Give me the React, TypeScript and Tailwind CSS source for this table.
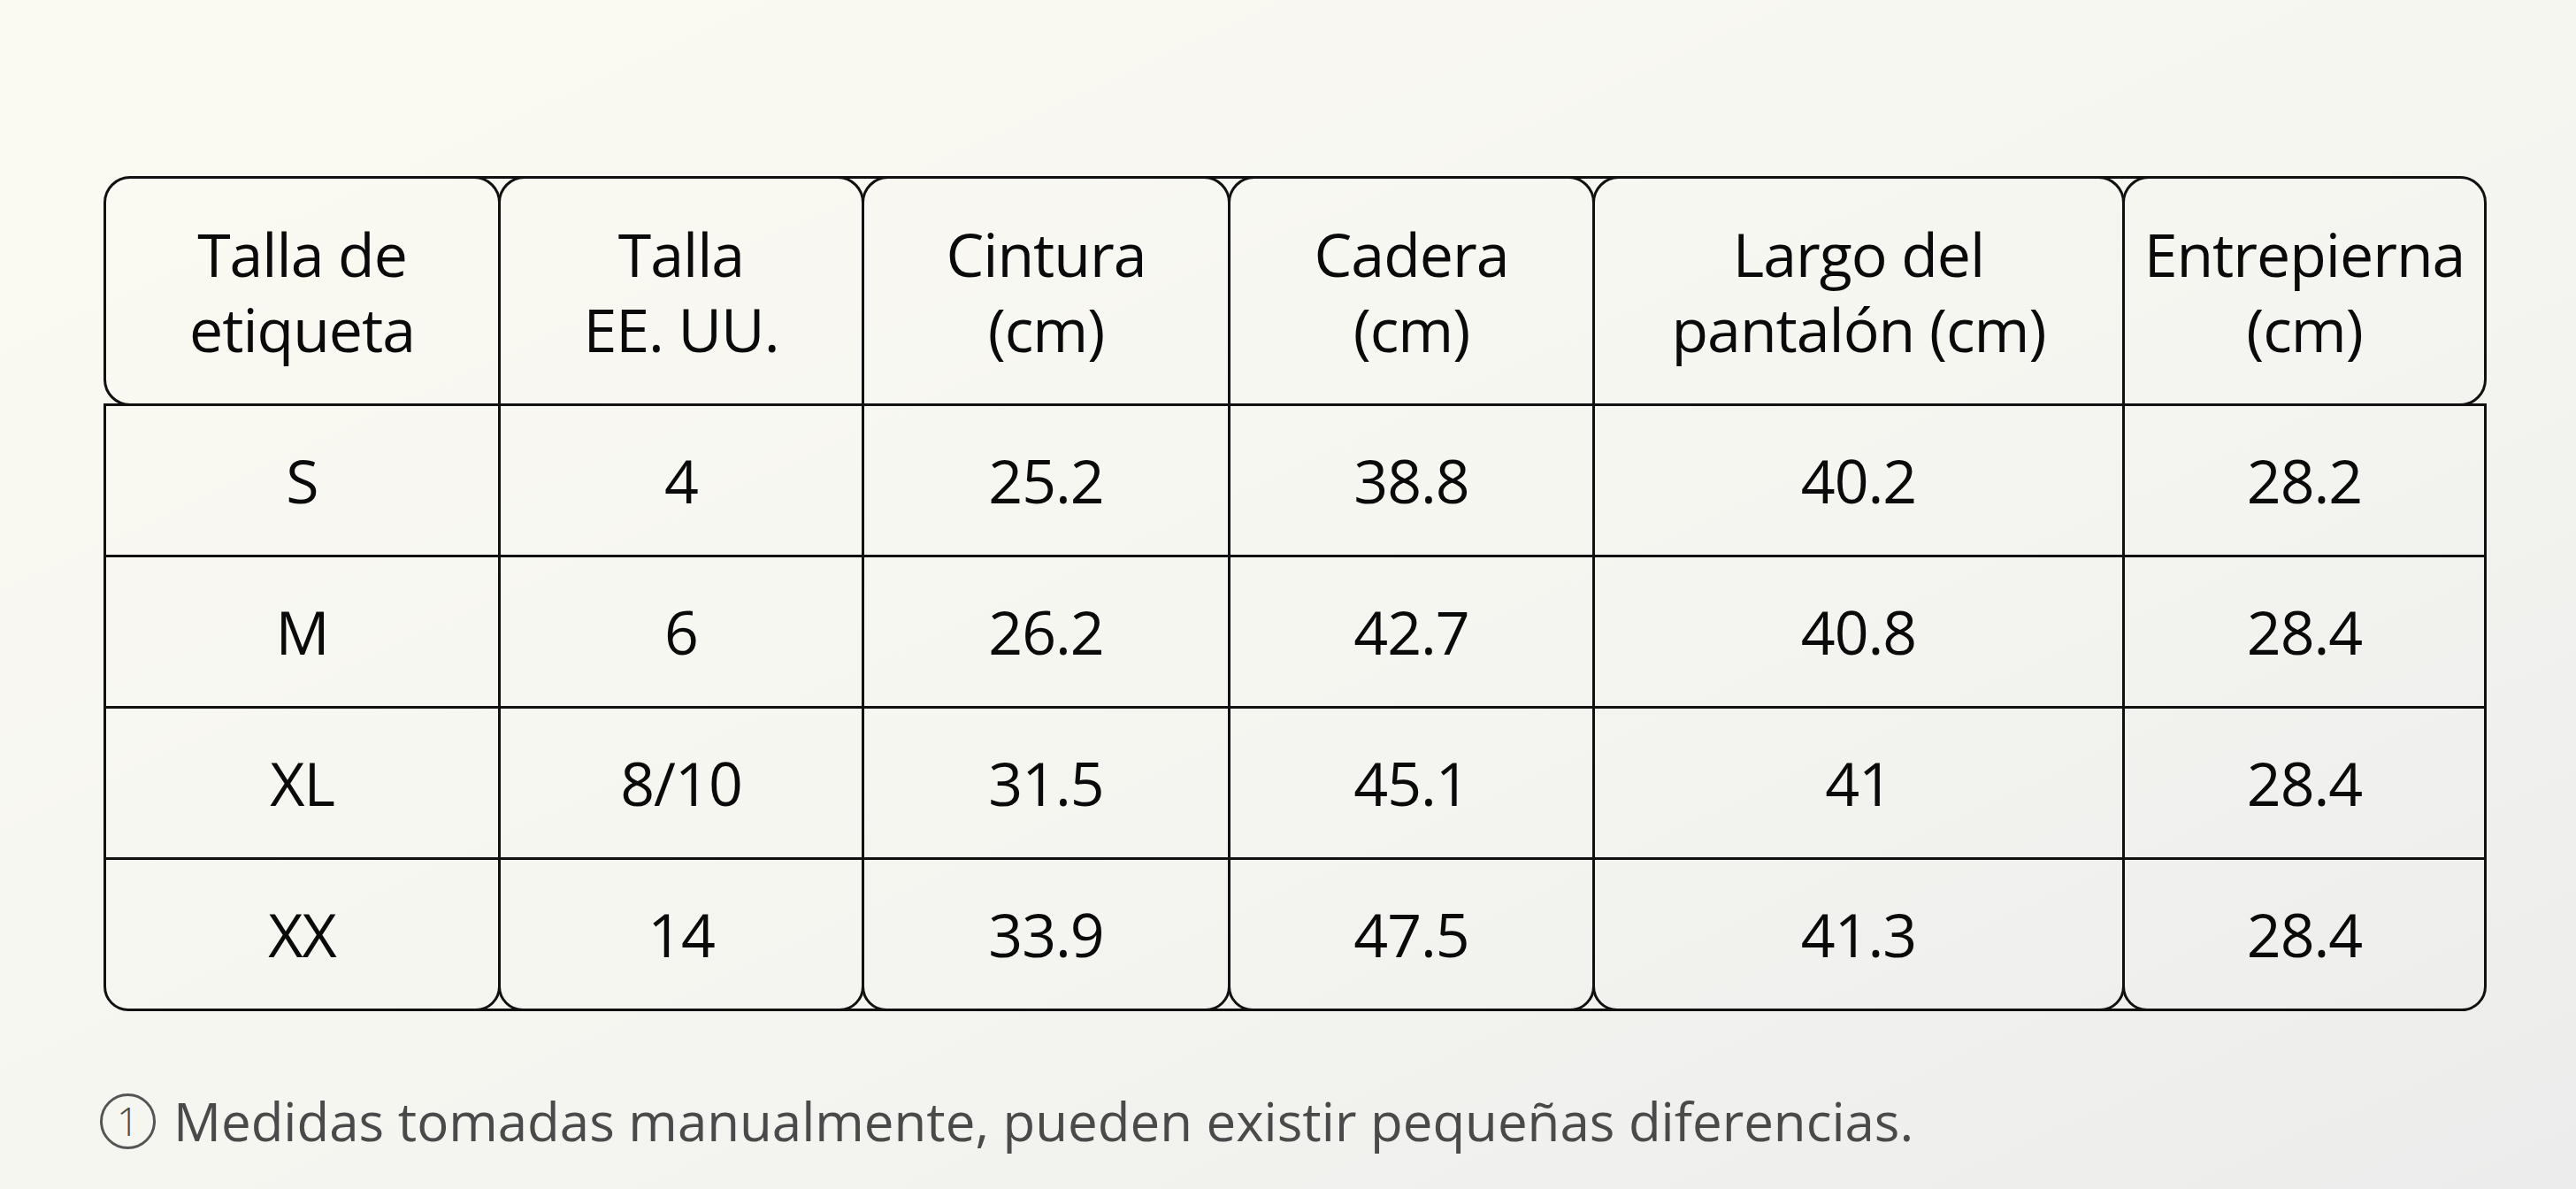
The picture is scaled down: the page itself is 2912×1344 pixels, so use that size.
import React from "react"

const cols = [
  { head: ["Talla de", "etiqueta"], w: "w-[449px]" },
  { head: ["Talla", "EE. UU."], w: "w-[414px]" },
  { head: ["Cintura", "(cm)"], w: "w-[417px]" },
  { head: ["Cadera", "(cm)"], w: "w-[415px]" },
  { head: ["Largo del", "pantalón (cm)"], w: "w-[602px]" },
  { head: ["Entrepierna", "(cm)"], w: "w-[412px]" },
]

const rows = [
  ["S", "4", "25.2", "38.8", "40.2", "28.2"],
  ["M", "6", "26.2", "42.7", "40.8", "28.4"],
  ["XL", "8/10", "31.5", "45.1", "41", "28.4"],
  ["XX", "14", "33.9", "47.5", "41.3", "28.4"],
]

export default function App() {
  return (
    <div className="min-h-screen w-full bg-linear-to-br from-[#fbfaf2] via-[#f6f6f1] to-[#ececec] pt-[199px] pl-[117px] font-['Open_Sans',sans-serif] text-[#0a0a0a]">
      <div className="relative w-fit">
        {/* straight line bridging the rounded header tops */}
        <div className="absolute left-[30px] right-[30px] top-0 h-[3px] bg-[#111]" />
        <div className="flex">
          {cols.map((c, i) => (
            <div
              key={i}
              className={[
                "flex h-[260px] flex-col items-center justify-center border-[3px] border-[#111] rounded-t-[30px] text-[68px] font-medium leading-[85px] tracking-[-0.015em]",
                c.w,
                i > 0 ? "-ml-[3px]" : "rounded-bl-[30px]",
                i === cols.length - 1 ? "rounded-br-[30px]" : "",
              ].join(" ")}
            >
              <span>{c.head[0]}</span>
              <span>{c.head[1]}</span>
            </div>
          ))}
        </div>

        {rows.map((r, ri) => (
          <div key={ri} className="-mt-[3px] flex">
            {r.map((v, ci) => (
              <div
                key={ci}
                className={[
                  "flex h-[174px] items-center justify-center border-[3px] border-[#111] text-[68px] font-medium tracking-[-0.015em]",
                  cols[ci].w,
                  ci > 0 ? "-ml-[3px]" : "",
                  ri === rows.length - 1 ? "rounded-b-[28px]" : "",
                ].join(" ")}
              >
                {v}
              </div>
            ))}
          </div>
        ))}
        {/* straight line bridging the rounded bottoms */}
        <div className="absolute bottom-0 left-[30px] right-[30px] h-[3px] bg-[#111]" />
      </div>

      <div className="-ml-[4px] mt-[92px] flex h-[64px] items-center gap-[20px] text-[60px] text-[#4a4a4a]">
        <span className="flex h-[63px] w-[63px] items-center justify-center rounded-full border-[3px] border-[#555] text-[44px] font-light leading-none">
          1
        </span>
        <span>Medidas tomadas manualmente, pueden existir pequeñas diferencias.</span>
      </div>
    </div>
  )
}
